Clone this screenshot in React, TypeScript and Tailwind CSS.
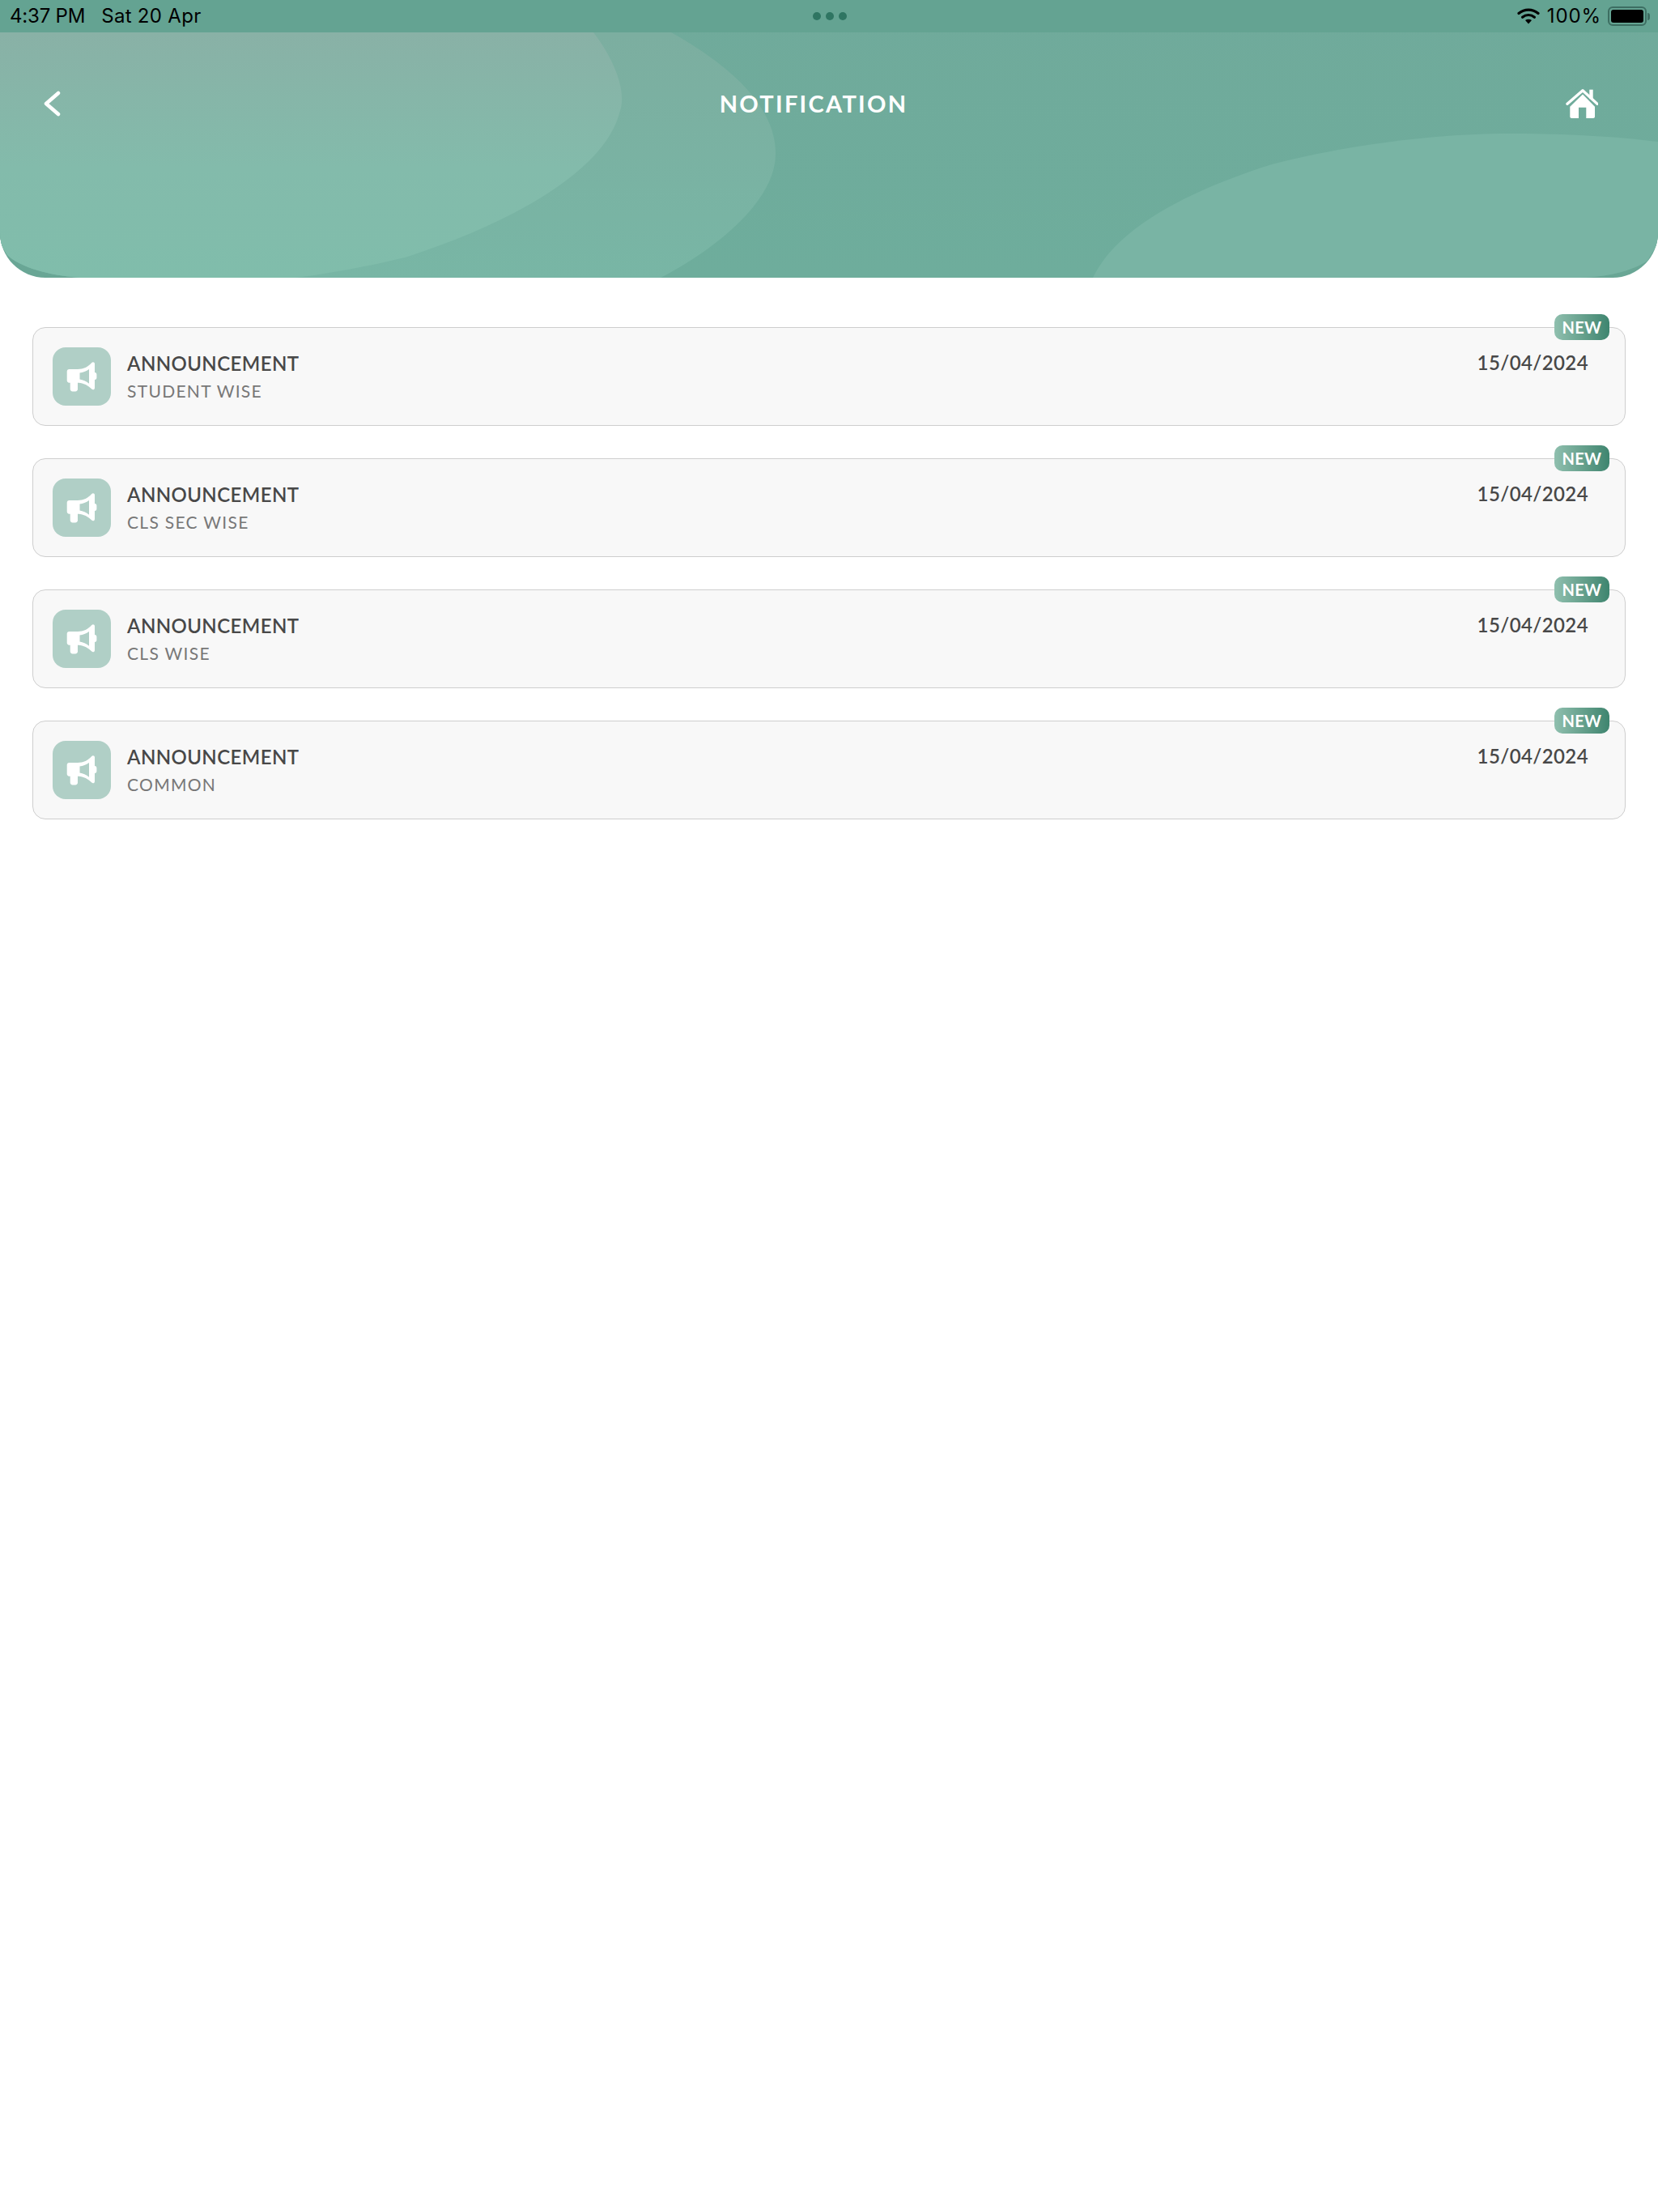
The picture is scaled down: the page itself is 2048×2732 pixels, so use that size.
import React from "react";

const rows = ["STUDENT WISE", "CLS SEC WISE", "CLS WISE", "COMMON"];

function HeaderArt() {
  return (
    <svg className="absolute inset-0 block" width="2048" height="343" viewBox="0 0 2048 343" aria-hidden="true">
      <defs>
        <linearGradient id="base" x1="0" y1="0" x2="0" y2="1">
          <stop offset="0" stopColor="#70aa9b" />
          <stop offset="1" stopColor="#6ead9c" />
        </linearGradient>
        <linearGradient id="one" x1="0" y1="0" x2="0" y2="1">
          <stop offset="0" stopColor="#89b1a6" />
          <stop offset="0.55" stopColor="#83bbab" />
          <stop offset="1" stopColor="#80bdab" />
        </linearGradient>
        <linearGradient id="two" x1="0" y1="0" x2="0" y2="1">
          <stop offset="0" stopColor="#7caea0" />
          <stop offset="1" stopColor="#78b6a5" />
        </linearGradient>
        <clipPath id="face">
          <path d="M0 0H2048V300L2035 322C2015 335 1985 342 1951 343H98C60 340 25 330 9 315L0 300Z" />
        </clipPath>
      </defs>
      <g clipPath="url(#face)">
        <rect width="2048" height="343" fill="url(#base)" />
        <path d="M0 40H829C900 80 958 130 958 190C958 250 880 310 816 343H0Z" fill="url(#two)" />
        <path d="M0 40H733C760 75 775 115 765 140C745 215 620 280 500 318C450 330 410 337 366 343H0Z" fill="url(#one)" />
        <path d="M1350 343C1380 280 1470 235 1571 203C1680 175 1790 165 1861 165C1930 165 1990 168 2048 175V343Z" fill="#79b4a4" />
      </g>
    </svg>
  );
}

function Megaphone() {
  return (
    <svg width="72" height="72" viewBox="0 0 72 72" className="block" aria-hidden="true">
      <path
        fill="#fff"
        fillRule="evenodd"
        d="M20.5 27H31C38 27 44 24 48.3 19C49.6 17.6 52 18.2 52 20.5V31C53.6 31 54.4 32.2 54.4 33.5V37.5C54.4 38.8 53.6 40 52 40V50C52 52.4 49.6 53 48.3 51.6C44 47 38 44 32 43.7H31V51.5C31 53.2 29.8 54.4 28 54.4H24.6C22.9 54.4 21.7 53.2 21.7 51.5V43.7H20.5C18.8 43.7 17.7 42.5 17.7 40.8V29.8C17.7 28.1 18.8 27 20.5 27ZM33.5 31.5V39.5C37.5 40 41.5 42 45 44.8V27C41.5 29.6 37.5 31.2 33.5 31.5Z"
      />
    </svg>
  );
}

function Home() {
  return (
    <svg width="40" height="38" viewBox="0 0 40 38" className="block" aria-hidden="true">
      <path d="M2 19.3L21 2.7L39 19.3" fill="none" stroke="#fff" strokeWidth="3.4" strokeLinecap="round" strokeLinejoin="round" />
      <rect x="29.3" y="1.7" width="4.4" height="11.5" fill="#fff" />
      <path
        fill="#fff"
        fillRule="evenodd"
        d="M5.3 22.7L21 7.6L36 22.7V35C36 36.2 35.2 37 34 37H25.3V23.7H16V37H7.3C6.1 37 5.3 36.2 5.3 35Z"
      />
    </svg>
  );
}

function StatusBar() {
  return (
    <div className="relative h-10 bg-[#64a392] flex items-center justify-between pl-3 pr-[10px] text-[24px] leading-none text-black font-['Inter',sans-serif]">
      <div className="flex gap-[20px] w-[300px]">
        <span className="tracking-[-0.2px]">4:37 PM</span>
        <span className="tracking-[0.3px]">Sat 20 Apr</span>
      </div>
      <div className="flex gap-[6px]">
        <span className="size-[10px] rounded-full bg-[#2f7562]" />
        <span className="size-[10px] rounded-full bg-[#2f7562]" />
        <span className="size-[10px] rounded-full bg-[#2f7562]" />
      </div>
      <div className="flex items-center justify-end w-[300px]">
        <svg width="28" height="20" viewBox="0 0 28 20" className="block" aria-hidden="true">
          <path d="M2 6.6C9.2 .6 18.8 .6 26 6.6" fill="none" stroke="#000" strokeWidth="3.2" strokeLinecap="round" />
          <path d="M6.6 11.2C11 7.6 17 7.6 21.4 11.2" fill="none" stroke="#000" strokeWidth="3.2" strokeLinecap="round" />
          <path d="M10 15C12.4 13.2 15.6 13.2 18 15L14 19.6Z" fill="#000" />
        </svg>
        <span className="ml-[9px] tracking-[0.9px]">100%</span>
        <span className="ml-[8px] w-[48px] h-[24px] rounded-[6px] border-2 border-[#3d6e62] p-[2px] flex">
          <span className="flex-1 rounded-[3px] bg-black" />
        </span>
        <span className="ml-[1px] w-[3px] h-[9px] rounded-r-full bg-[#3d6e62]" />
      </div>
    </div>
  );
}

function Card({ sub }: { sub: string }) {
  return (
    <div className="relative h-[122px] rounded-2xl border-[1.5px] border-[#cecece] bg-[#f8f8f8] flex items-center pl-[24px] pr-[45px]">
      <div className="size-[72px] rounded-2xl bg-[#b0cfc6] shrink-0">
        <Megaphone />
      </div>
      <div className="ml-[20px] flex-1 flex flex-col">
        <span className="text-[24px] leading-[30px] font-semibold text-[#484848] tracking-[0.4px]">ANNOUNCEMENT</span>
        <span className="mt-[5px] text-[21px] leading-[28px] text-[#777777] tracking-[1.3px]">{sub}</span>
      </div>
      <span className="self-start mt-[28px] text-[24px] leading-[30px] font-semibold text-[#484848] tracking-[0.4px]">15/04/2024</span>
      <span className="absolute -top-[17px] right-[19px] w-[68px] h-[32px] rounded-[10px] bg-gradient-to-r from-[#8fbfae] to-[#3e856f] text-white text-[20px] font-bold leading-[32px] text-center tracking-[0.3px]">
        NEW
      </span>
    </div>
  );
}

export default function App() {
  return (
    <div className="w-[2048px] h-[2732px] bg-white font-['Lato',sans-serif]">
      <header className="relative h-[343px] overflow-hidden rounded-b-[56px] bg-[#69a695]">
        <HeaderArt />
        <StatusBar />
        <div className="relative flex items-center h-[36px] mt-[70px] pl-[54px] pr-[74px]">
          <svg width="22" height="32" viewBox="0 0 22 32" className="block" aria-hidden="true">
            <path d="M18 3L3 16L18 29" fill="none" stroke="#fff" strokeWidth="4.5" strokeLinecap="round" strokeLinejoin="round" />
          </svg>
          <h1 className="flex-1 text-center text-[29px] leading-9 font-bold text-white tracking-[2.3px]">NOTIFICATION</h1>
          <Home />
        </div>
      </header>
      <main className="flex flex-col gap-[40px] pt-[61px] px-[40px]">
        {rows.map((r) => (
          <Card key={r} sub={r} />
        ))}
      </main>
    </div>
  );
}
